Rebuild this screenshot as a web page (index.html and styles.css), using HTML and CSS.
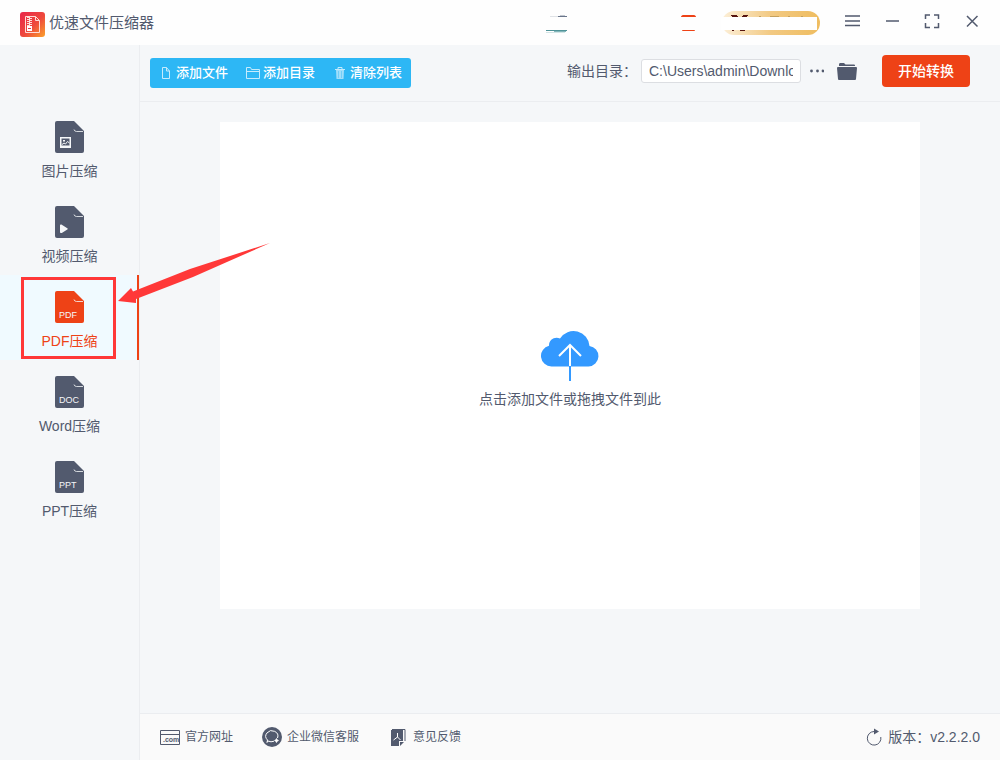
FILE: index.html
```html
<!DOCTYPE html>
<html lang="zh-CN">
<head>
<meta charset="utf-8">
<meta name="viewport" content="width=device-width, initial-scale=1">
<title>优速文件压缩器</title>
<link rel="stylesheet" href="styles.css">
</head>
<body>
<svg class="defs" aria-hidden="true">
  <symbol id="doc" viewBox="0 0 29 32">
    <path fill="currentColor" d="M2 0h17l10 10v20a2 2 0 0 1-2 2H2a2 2 0 0 1-2-2V2a2 2 0 0 1 2-2z"/>
    <path fill="none" stroke="#f5f7f9" stroke-opacity=".8" d="M19 8.500q.5 2 2.500 2H28"/>
  </symbol>
</svg>

<header class="titlebar">
  <svg class="logo" viewBox="0 0 25 25" aria-hidden="true">
    <defs><linearGradient id="lg" x1="0" y1="0" x2="1" y2="1"><stop offset="0" stop-color="#e9264b"/><stop offset=".55" stop-color="#ee493c"/><stop offset="1" stop-color="#fba22c"/></linearGradient></defs>
    <rect width="25" height="25" rx="3" fill="url(#lg)"/>
    <path fill="none" stroke="#ffdcd8" d="M5.500 4.500h10l4 4v12h-14zM15.500 4.500v4h4"/>
    <path stroke="#ffdcd8" stroke-width="3" stroke-dasharray="1 1" d="M8.500 5v9M10.500 6v8"/>
    <path fill="#fff" d="M7 14h5v5H7z"/><path stroke="#e9364b" d="M8 16.500h3"/>
  </svg>
  <h1 class="title">优速文件压缩器</h1>
  <svg class="account" viewBox="0 0 275 24" aria-hidden="true">
    <defs><linearGradient id="gold"><stop offset="0" stop-color="#fcefd8"/><stop offset=".5" stop-color="#f2c982"/><stop offset="1" stop-color="#efbd60"/></linearGradient></defs>
    <path stroke="#dfe2e6" d="M5 5.500h8"/><path stroke="#69758a" d="M13 5.500h9"/><path stroke="#c3c8d0" d="M15 4.500h5"/>
    <path stroke="#4f9398" d="M1 19.500h21"/><path stroke="#84b6ba" d="M9 20.500h12"/><path stroke="#d2e4e5" d="M1 21.500h19"/>
    <path fill="#ee4216" d="M136 6c0-1 1-2 2-2h11c1 0 2 1 2 2zM137 19h13c0 1-1 1-2 1h-9c-1 0-2 0-2-1z"/>
    <rect x="177" width="98" height="24" rx="12" fill="url(#gold)"/>
    <path stroke="#56140f" d="M186 4.500h6M187 5.500h6M198 4.500h5M197 5.500h5M187 19.500h2M195 19.500h5"/>
    <path stroke="#c6a15d" d="M214 5.500h2M225 5.500h9M243 5.500h2M256 5.500h2"/>
    <path fill="#fff" d="M176 6h96v13h-96z"/>
  </svg>
  <div class="window-controls">
    <button type="button" aria-label="菜单"><svg viewBox="0 0 16 16"><path d="M1 3h15M1 8h15M1 12.500h15"/></svg></button>
    <button type="button" aria-label="最小化"><svg viewBox="0 0 16 16"><path d="M2 8h13"/></svg></button>
    <button type="button" aria-label="最大化"><svg viewBox="0 0 16 16"><path d="M1.500 6V2H6M10 2h4.500v4M14.500 10v4.500H10M6 14.500H1.500V10"/></svg></button>
    <button type="button" aria-label="关闭"><svg viewBox="0 0 16 16"><path d="M3 3l10.500 10.500M13.500 3L3 13.500"/></svg></button>
  </div>
</header>

<div class="body">
  <nav class="sidebar">
    <button type="button" class="nav-item">
      <svg class="nav-icon" viewBox="0 0 29 32" aria-hidden="true"><use href="#doc"/><path fill="#f5f7f9" fill-rule="evenodd" d="M5 16h11v11H5zM6.500 17.500v7h8v-7z"/><path fill="none" stroke="#f5f7f9" d="M7 23.500l2-1.500 1.500 1 2-2.500 2 1.500"/><path fill="#f5f7f9" d="M8 19h2v1.500H8z"/></svg>
      <span>图片压缩</span>
    </button>
    <button type="button" class="nav-item">
      <svg class="nav-icon" viewBox="0 0 29 32" aria-hidden="true"><use href="#doc"/><path fill="#f5f7f9" d="M5 19.500c0-1 1-1.300 1.800-.8l5.500 3.500c.6.400.6 1 0 1.400l-5.500 3.300c-.8.500-1.800.1-1.800-.8z"/></svg>
      <span>视频压缩</span>
    </button>
    <button type="button" class="nav-item active" aria-current="page">
      <svg class="nav-icon" viewBox="0 0 29 32" aria-hidden="true"><use href="#doc"/><text x="4" y="27">PDF</text></svg>
      <span>PDF压缩</span>
      <i class="highlight"></i>
      <svg class="pointer" viewBox="0 0 154 62" aria-hidden="true"><path fill="#ff3838" d="M1 59L14 46l2 3.500L73 27 153 1 76 35 19 57v4z"/></svg>
    </button>
    <button type="button" class="nav-item">
      <svg class="nav-icon" viewBox="0 0 29 32" aria-hidden="true"><use href="#doc"/><text x="4" y="27">DOC</text></svg>
      <span>Word压缩</span>
    </button>
    <button type="button" class="nav-item">
      <svg class="nav-icon" viewBox="0 0 29 32" aria-hidden="true"><use href="#doc"/><text x="4" y="27">PPT</text></svg>
      <span>PPT压缩</span>
    </button>
  </nav>

  <div class="workspace">
    <div class="toolbar">
      <div class="actions">
        <button type="button"><svg viewBox="0 0 14 14" aria-hidden="true"><path d="M3.500 1.500h4l3 3.500v7.500h-7zM7.500 1.500V5h3"/></svg>添加文件</button>
        <button type="button"><svg viewBox="0 0 14 14" aria-hidden="true"><path d="M.5 12.500v-11h4l1 2h8v9zM.5 5.500h13"/></svg>添加目录</button>
        <button type="button"><svg viewBox="0 0 14 14" aria-hidden="true"><path fill="#9fdefb" stroke="none" d="M3 4h8l-.5 9h-7z"/><path d="M2 3.500h10M5 3V1.500h4V3"/><path stroke="#6fcdf8" d="M5.500 5v7M8.500 5v7"/></svg>清除列表</button>
      </div>
      <div class="output">
        <label for="path">输出目录：</label>
        <input id="path" type="text" value="C:\Users\admin\Downloads">
        <button type="button" class="plain more" aria-label="更多"><svg viewBox="0 0 14 4"><circle cx="1.500" cy="2" r="1.400"/><circle cx="7.500" cy="2" r="1.400"/><circle cx="13" cy="2" r="1.400"/></svg></button>
        <button type="button" class="plain folder" aria-label="打开目录"><svg viewBox="0 0 20 17"><path d="M2 1.500Q2 0 3 0h4l1.500 1.500H17q1 0 1 1V3H2z"/><path d="M1 4h18q1 0 1 1l-1 11q0 1-1 1H2q-1 0-1-1L0 5q0-1 1-1z"/></svg></button>
        <button type="button" class="start">开始转换</button>
      </div>
    </div>

    <main class="content">
      <button type="button" class="dropzone">
        <svg viewBox="0 0 58 50" aria-hidden="true"><path fill="#3399ff" d="M10.500 35.500A10.500 10.500 0 0 1 8 14.800C8 8 14 5.500 19 7.500A16 16 0 0 1 48.500 15 10.300 10.300 0 0 1 47.500 35.500z"/><path stroke="#3399ff" stroke-width="2" d="M29 35v15"/><path fill="none" stroke="#fff" stroke-width="2" d="M29 35V14M18 25l11-11 11 11"/></svg>
        <span>点击添加文件或拖拽文件到此</span>
      </button>
    </main>

    <footer class="statusbar">
      <a href="#"><svg viewBox="0 0 20 20" aria-hidden="true"><path fill="none" stroke="currentColor" d="M.5 3.500h19v14H.5zM1 7.500h18"/><text x="3" y="15">.com</text></svg>官方网址</a>
      <a href="#"><svg viewBox="0 0 20 20" aria-hidden="true"><circle cx="10" cy="10" r="10" fill="currentColor"/><path fill="none" stroke="#fff" d="M6 14l-1 1.500.5-2.500A6 5.500 0 1 1 15.500 11M6 14q3 1.500 6 .2"/><path fill="#fff" d="M14.500 11l1 1.500 1.500 1-1.500 1-1 1.500-1-1.500-1.500-1 1.500-1z"/></svg>企业微信客服</a>
      <a href="#"><svg viewBox="0 0 20 20" aria-hidden="true"><path fill="currentColor" d="M3 3h12v11h-4v5H3z"/><path fill="none" stroke="currentColor" d="M4 2.500h13V14"/><path fill="currentColor" d="M12 15h4l-4 4z"/><path fill="none" stroke="#fff" d="M9.500 6v4l3 3M9.500 10l-4 3"/></svg>意见反馈</a>
      <div class="version"><svg viewBox="0 0 16 18" aria-hidden="true"><path fill="none" stroke="currentColor" d="M8 3.500A6.800 6.800 0 1 0 14.800 9"/><path fill="currentColor" d="M8 .5l5 3-5 3z"/></svg><span>版本：v2.2.2.0</span></div>
    </footer>
  </div>
</div>
</body>
</html>
```

FILE: styles.css
```css
* { box-sizing: border-box; }
body {
  margin: 0;
  min-height: 100vh;
  display: flex;
  flex-direction: column;
  background: #f5f7f9;
  color: #525a6e;
  font: 14px/20px "Liberation Sans", "Noto Sans CJK SC", sans-serif;
}
button, input { font: inherit; color: inherit; }
button { border: 0; padding: 0; background: none; cursor: pointer; }
svg { display: block; flex: none; }
.defs { position: absolute; width: 0; height: 0; }

.titlebar {
  display: flex;
  align-items: center;
  height: 45px;
  padding: 0 20px;
  background: #fefefe;
}
.logo { width: 25px; height: 25px; margin-top: 4px; }
.title { margin: 0 auto 0 4px; font-size: 15px; font-weight: 400; }
.account { width: 275px; height: 24px; }
.window-controls { display: flex; gap: 24px; margin: 0 0 3px 24px; }
.window-controls svg { width: 16px; height: 16px; fill: none; stroke: #525a6e; stroke-width: 1.500; }

.body { flex: 1; display: flex; }
.sidebar {
  flex: none;
  width: 140px;
  padding-top: 60px;
  border-right: 1px solid #ebedf0;
}
.nav-item {
  position: relative;
  display: flex;
  flex-direction: column;
  align-items: center;
  gap: 8px;
  width: 100%;
  height: 85px;
  padding-top: 16px;
}
.nav-item.active { color: #ee4216; background: #f0faff; box-shadow: inset -2px 0 #ee4216; }
.nav-icon { width: 29px; height: 32px; }
.nav-icon text { font-size: 9px; fill: #f5f7f9; }
.highlight { position: absolute; left: 21px; top: 2px; width: 95px; height: 82px; border: 3px solid #ff3838; }
.pointer { position: absolute; left: 117px; top: -33px; width: 154px; height: 62px; z-index: 2; pointer-events: none; }

.workspace { flex: 1; min-width: 0; display: flex; flex-direction: column; }
.toolbar {
  display: flex;
  justify-content: space-between;
  align-items: flex-start;
  padding: 10px 30px 13px 10px;
  border-bottom: 1px solid #ebedf0;
}
.actions {
  display: flex;
  height: 30px;
  margin-top: 3px;
  border-radius: 3px;
  background: #2db7f5;
  color: #fff;
  font-size: 13px;
  font-weight: 500;
}
.actions button { display: flex; align-items: center; gap: 3px; padding: 0 9px; white-space: nowrap; }
.actions svg { width: 14px; height: 14px; fill: none; stroke: #c5ebfd; }
.output { display: flex; align-items: center; }
.output label { white-space: nowrap; }
.output input {
  width: 160px;
  height: 24px;
  margin-left: 4px;
  padding: 0 7px;
  border: 1px solid #dcdee2;
  border-radius: 3px;
  background: #fff;
}
.plain svg { fill: #525a6e; }
.more { margin-left: 9px; }
.more svg { width: 14px; height: 4px; }
.folder { margin-left: 13px; }
.folder svg { width: 20px; height: 17px; }
.start {
  width: 88px;
  height: 32px;
  margin-left: 25px;
  border-radius: 4px;
  background: #ee4216;
  color: #fff;
  font-weight: 500;
}

.content { flex: 1; display: flex; padding: 20px 80px 104px; }
.dropzone {
  flex: 1;
  display: flex;
  flex-direction: column;
  align-items: center;
  justify-content: center;
  gap: 8px;
  padding-top: 8px;
  background: #fff;
}
.dropzone svg { width: 58px; height: 50px; }

.statusbar {
  display: flex;
  align-items: center;
  gap: 29px;
  height: 47px;
  padding: 0 20px;
  border-top: 1px solid #ebedf0;
  background: #fafafa;
  font-size: 12px;
}
.statusbar a { display: flex; align-items: center; gap: 5px; color: inherit; text-decoration: none; }
.statusbar a svg { width: 20px; height: 20px; }
.statusbar text { font-size: 7px; font-weight: 700; fill: #525a6e; }
.version { display: flex; align-items: center; gap: 6px; margin-left: auto; font-size: 14px; }
.version svg { width: 16px; height: 18px; }
```
